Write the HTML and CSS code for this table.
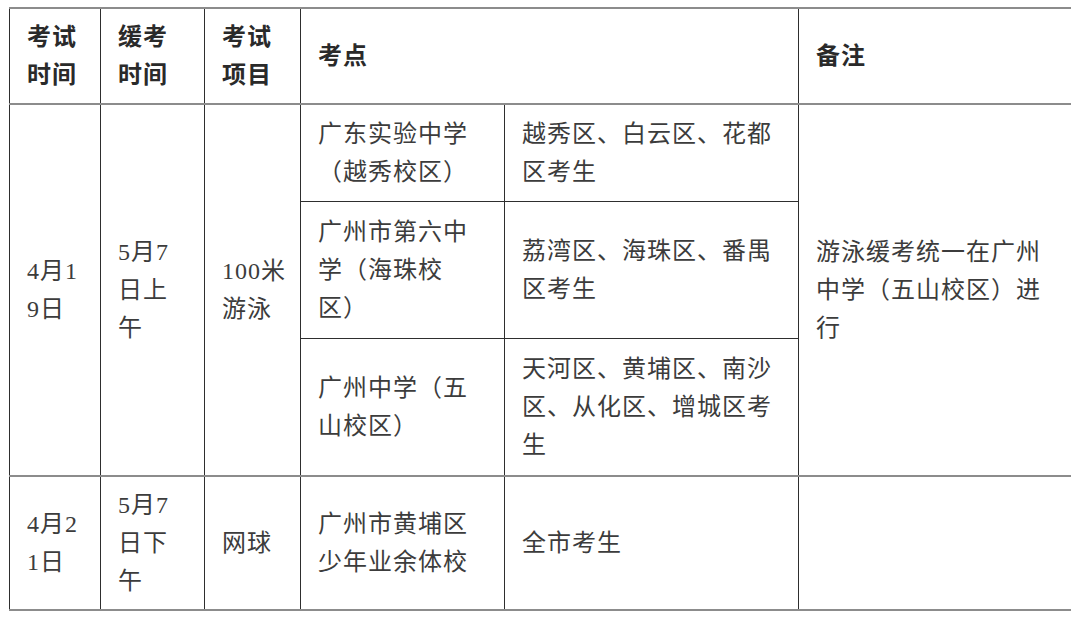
FILE: index.html
```html
<!DOCTYPE html>
<html lang="zh-CN">
<head>
<meta charset="utf-8">
<link rel="stylesheet" href="styles.css">
</head>
<body>
<table class="sched">
  <colgroup>
    <col class="c1"><col class="c2"><col class="c3"><col class="c4"><col class="c5"><col class="c6">
  </colgroup>
  <thead>
    <tr class="r-head">
      <th>考试<br>时间</th>
      <th>缓考<br>时间</th>
      <th>考试<br>项目</th>
      <th colspan="2">考点</th>
      <th>备注</th>
    </tr>
  </thead>
  <tbody>
    <tr class="r-a">
      <td rowspan="3" class="major">4月1<br>9日</td>
      <td rowspan="3" class="major">5月7<br>日上<br>午</td>
      <td rowspan="3" class="major">100米<br>游泳</td>
      <td>广东实验中学<br>（越秀校区）</td>
      <td>越秀区、白云区、花都<br>区考生</td>
      <td rowspan="3" class="major">游泳缓考统一在广州<br>中学（五山校区）进<br>行</td>
    </tr>
    <tr class="r-b">
      <td>广州市第六中<br>学（海珠校<br>区）</td>
      <td>荔湾区、海珠区、番禺<br>区考生</td>
    </tr>
    <tr class="r-c">
      <td class="major">广州中学（五<br>山校区）</td>
      <td class="major">天河区、黄埔区、南沙<br>区、从化区、增城区考<br>生</td>
    </tr>
    <tr class="r-d">
      <td class="major">4月2<br>1日</td>
      <td class="major">5月7<br>日下<br>午</td>
      <td class="major">网球</td>
      <td class="major">广州市黄埔区<br>少年业余体校</td>
      <td class="major">全市考生</td>
      <td class="major"></td>
    </tr>
  </tbody>
</table>
</body>
</html>
```

FILE: styles.css
```css
html, body {
  margin: 0;
  padding: 0;
  background: #ffffff;
}

body {
  padding: 7px 0 0 9px;
}

.sched {
  border-collapse: collapse;
  table-layout: fixed;
  width: 1061px;
  font-family: "Liberation Serif", "Noto Sans CJK SC", serif;
  font-size: 24px;
  line-height: 38px;
  letter-spacing: 1px;
  color: #3c3c3c;
}

.c1 { width: 91px; }
.c2 { width: 104px; }
.c3 { width: 96px; }
.c4 { width: 204px; }
.c5 { width: 294px; }
.c6 { width: 272px; }

.sched th,
.sched td {
  padding: 0 10px 0 17px;
  text-align: left;
  vertical-align: middle;
  border-left: 1px solid #2e2e2e;
  border-top: 1px solid #2e2e2e;
  font-weight: 400;
  white-space: nowrap;
  overflow: hidden;
}

.sched th {
  font-weight: 700;
  color: #2a2a2a;
  border-top: 2px solid #8c8c8c;
  border-bottom: 2px solid #8c8c8c;
}

.sched td.major {
  border-bottom: 2px solid #8c8c8c;
}

.r-head { height: 96px; }
.r-a { height: 97px; }
.r-b { height: 137px; }
.r-c { height: 138px; }
.r-d { height: 134px; }
```
